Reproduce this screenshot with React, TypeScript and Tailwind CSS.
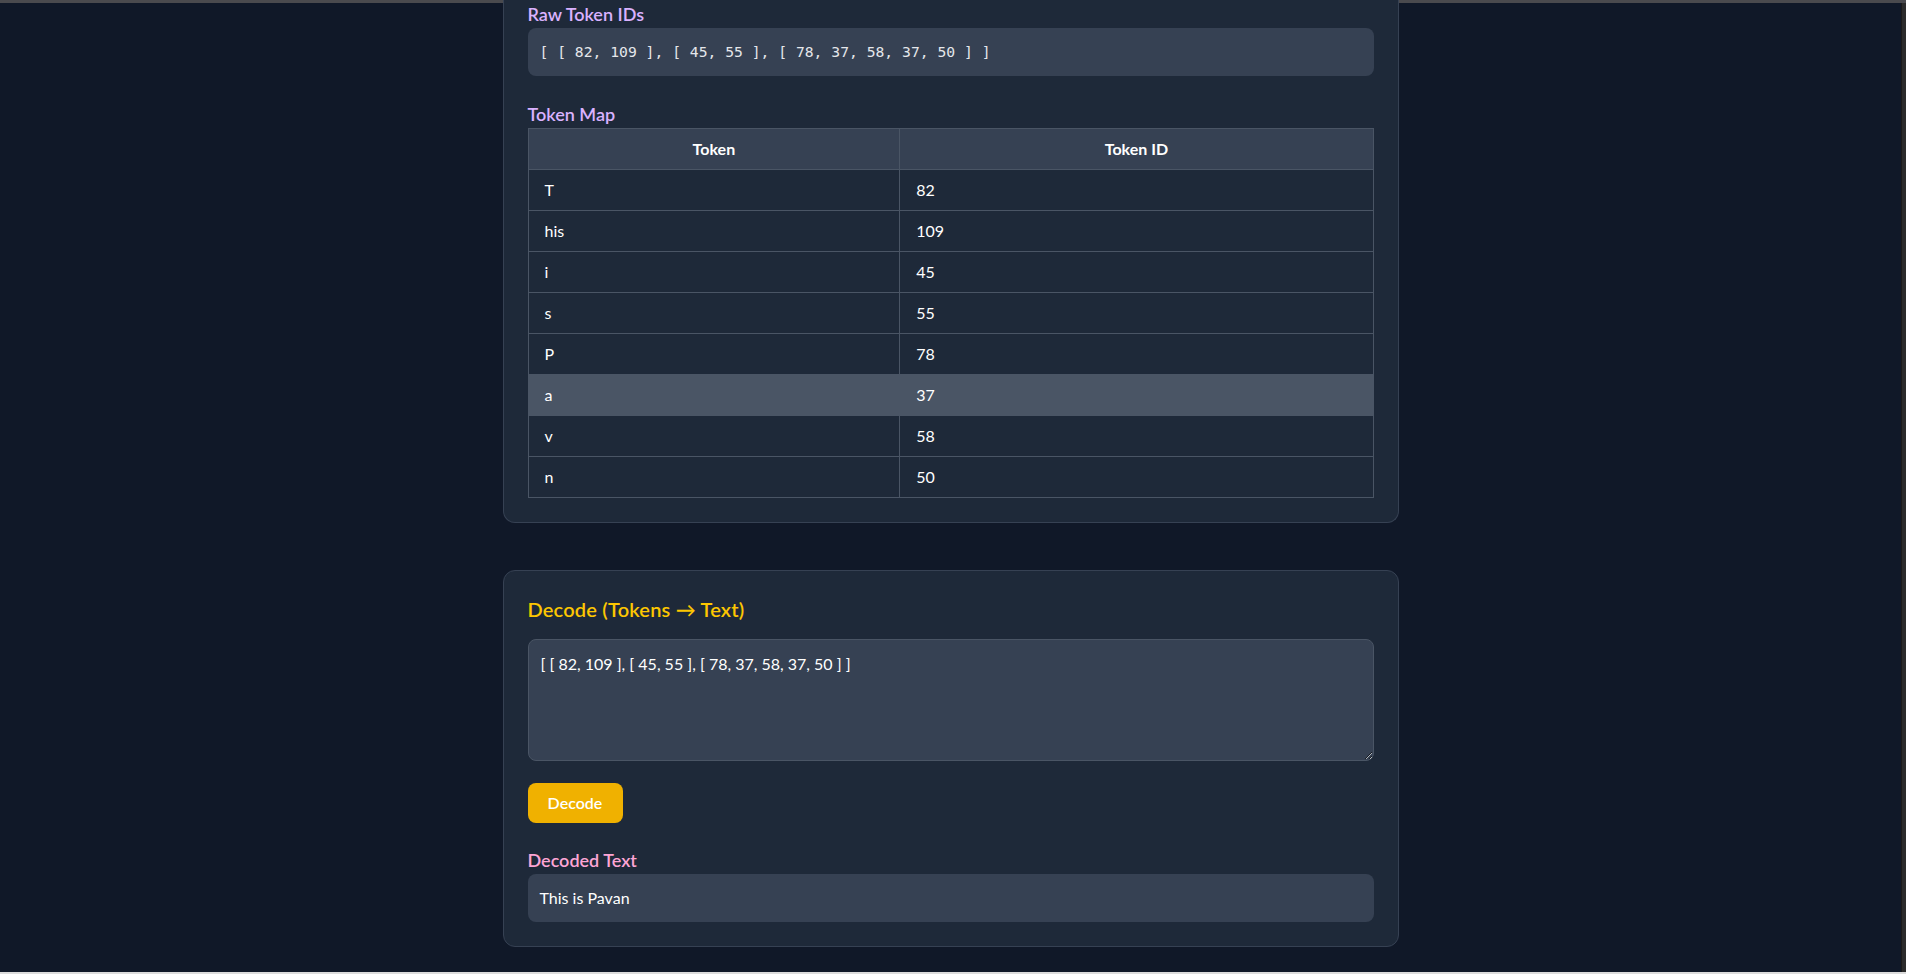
const tokenMap: [string, number][] = [
  ["T", 82],
  ["his", 109],
  ["i", 45],
  ["s", 55],
  ["P", 78],
  ["a", 37],
  ["v", 58],
  ["n", 50],
];

const rawIds = "[ [ 82, 109 ], [ 45, 55 ], [ 78, 37, 58, 37, 50 ] ]";

export default function App() {
  return (
    <div className="h-screen overflow-hidden flex flex-col bg-gray-900 text-white font-['Lato','Noto_Sans',sans-serif]">
      <div className="h-[3px] shrink-0 bg-[#4a4a4e]" />
      <div className="flex flex-1 min-h-0">
        <main className="flex-1 min-w-0 px-4">
          {/* encode card, scrolled so only its lower half shows */}
          <section className="max-w-[896px] mx-auto bg-gray-800 border border-gray-700 border-t-0 rounded-b-xl px-6 pb-6">
            <h3 className="-mt-[3px] text-lg font-semibold text-purple-300">Raw Token IDs</h3>
            <div className="bg-gray-700 rounded-lg px-3 py-3 font-['DejaVu_Sans_Mono',monospace] text-[14.7px] leading-6 text-gray-200 whitespace-pre">
              {rawIds}
            </div>

            <h3 className="mt-6 text-lg font-semibold text-purple-300">Token Map</h3>
            <table className="w-full border-collapse border border-gray-600 text-base">
              <thead>
                <tr className="bg-gray-700">
                  <th className="w-[44%] border border-gray-600 px-4 py-2 font-bold">Token</th>
                  <th className="border border-gray-600 px-4 py-2 font-bold">Token ID</th>
                </tr>
              </thead>
              <tbody>
                {tokenMap.map(([tok, id], i) => (
                  <tr key={i} className={i === 5 ? "bg-gray-600" : ""}>
                    <td className="border border-gray-600 px-4 py-2">{tok}</td>
                    <td className="border border-gray-600 px-4 py-2">{id}</td>
                  </tr>
                ))}
              </tbody>
            </table>
          </section>

          <section className="max-w-[896px] mx-auto mt-[47px] bg-gray-800 border border-gray-700 rounded-xl p-6">
            <h2 className="text-xl font-semibold text-yellow-400 mb-4 tracking-[0.2px]">Decode (Tokens → Text)</h2>
            <textarea
              rows={4}
              defaultValue={rawIds}
              className="block w-full bg-gray-700 border border-gray-600 rounded-lg p-3 text-base leading-6 text-white outline-none"
            />
            <button className="mt-[22px] w-[95px] bg-yellow-500 text-white font-semibold py-2 rounded-lg">Decode</button>
            <h3 className="mt-[23px] text-lg font-semibold text-pink-300">Decoded Text</h3>
            <div className="bg-gray-700 rounded-lg p-3 leading-6">This is Pavan</div>
          </section>
        </main>
        <div className="w-[5px] shrink-0 bg-[#2b2b2b] border-l border-[#1a1a1a]" />
      </div>
      <div className="h-[2px] shrink-0 bg-[#dcdcdc]" />
    </div>
  );
}
